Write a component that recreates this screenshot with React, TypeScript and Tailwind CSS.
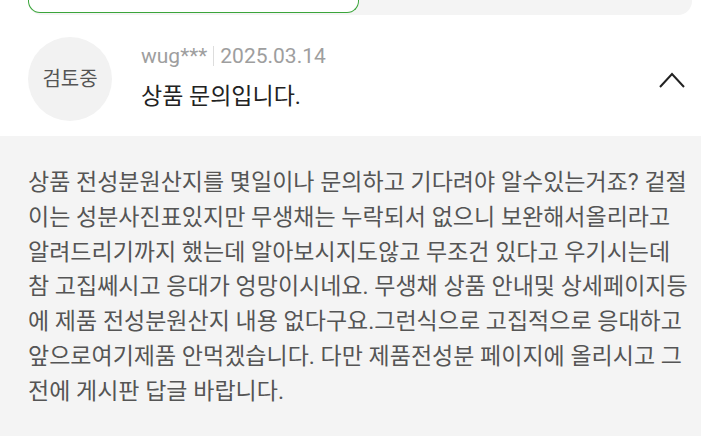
import React from "react";

const font = { fontFamily: 'Roboto, "Noto Sans CJK KR", sans-serif' };

const body =
  "상품 전성분원산지를 몇일이나 문의하고 기다려야 알수있는거죠? 겉절이는 성분사진표있지만 무생채는 누락되서 없으니 보완해서올리라고 알려드리기까지 했는데 알아보시지도않고 무조건 있다고 우기시는데 참 고집쎄시고 응대가 엉망이시네요. 무생채 상품 안내및 상세페이지등에 제품 전성분원산지 내용 없다구요.그런식으로 고집적으로 응대하고 앞으로여기제품 안먹겠습니다. 다만 제품전성분 페이지에 올리시고 그전에 게시판 답글 바랍니다.";

function ChevronUp() {
  return (
    <svg width="26" height="16" viewBox="0 0 26 16" fill="none">
      <path d="M1 15 L13 2 L25 15" stroke="#222" strokeWidth="2" />
    </svg>
  );
}

export default function App() {
  return (
    <div className="w-[701px] h-[439px] bg-white overflow-hidden" style={font}>
      <div className="ml-[28px] mr-[9px] h-[15px] bg-[#f4f4f4] rounded-b-[14px] flex">
        <div className="w-[331px] h-[13px] bg-white border border-t-0 border-[#3aa53a] rounded-b-[12px]" />
      </div>

      <div className="flex items-start pl-[28px] pr-[16px] h-[121px]">
        <div className="mt-[22px] w-[84px] h-[84px] shrink-0 rounded-full bg-[#f2f2f2] flex items-center justify-center text-[20px] text-[#555]">
          검토중
        </div>
        <div className="ml-[29px] mt-[27px] flex-1">
          <div className="flex items-center text-[21px] leading-[28px] text-[#9e9e9e]">
            <span>wug***</span>
            <span className="mx-[6px] w-px h-[20px] bg-[#dddddd]" />
            <span>2025.03.14</span>
          </div>
          <div className="mt-[11px] text-[23px] leading-[32px] text-[#222]">상품 문의입니다.</div>
        </div>
        <div className="mt-[57px]">
          <ChevronUp />
        </div>
      </div>

      <div className="bg-[#f4f4f4] pl-[28px] pr-[10px] pt-[30px] pb-[26px] h-[300px]">
        <p className="text-[23px] leading-[34.8px] text-[#555]">{body}</p>
      </div>
    </div>
  );
}
